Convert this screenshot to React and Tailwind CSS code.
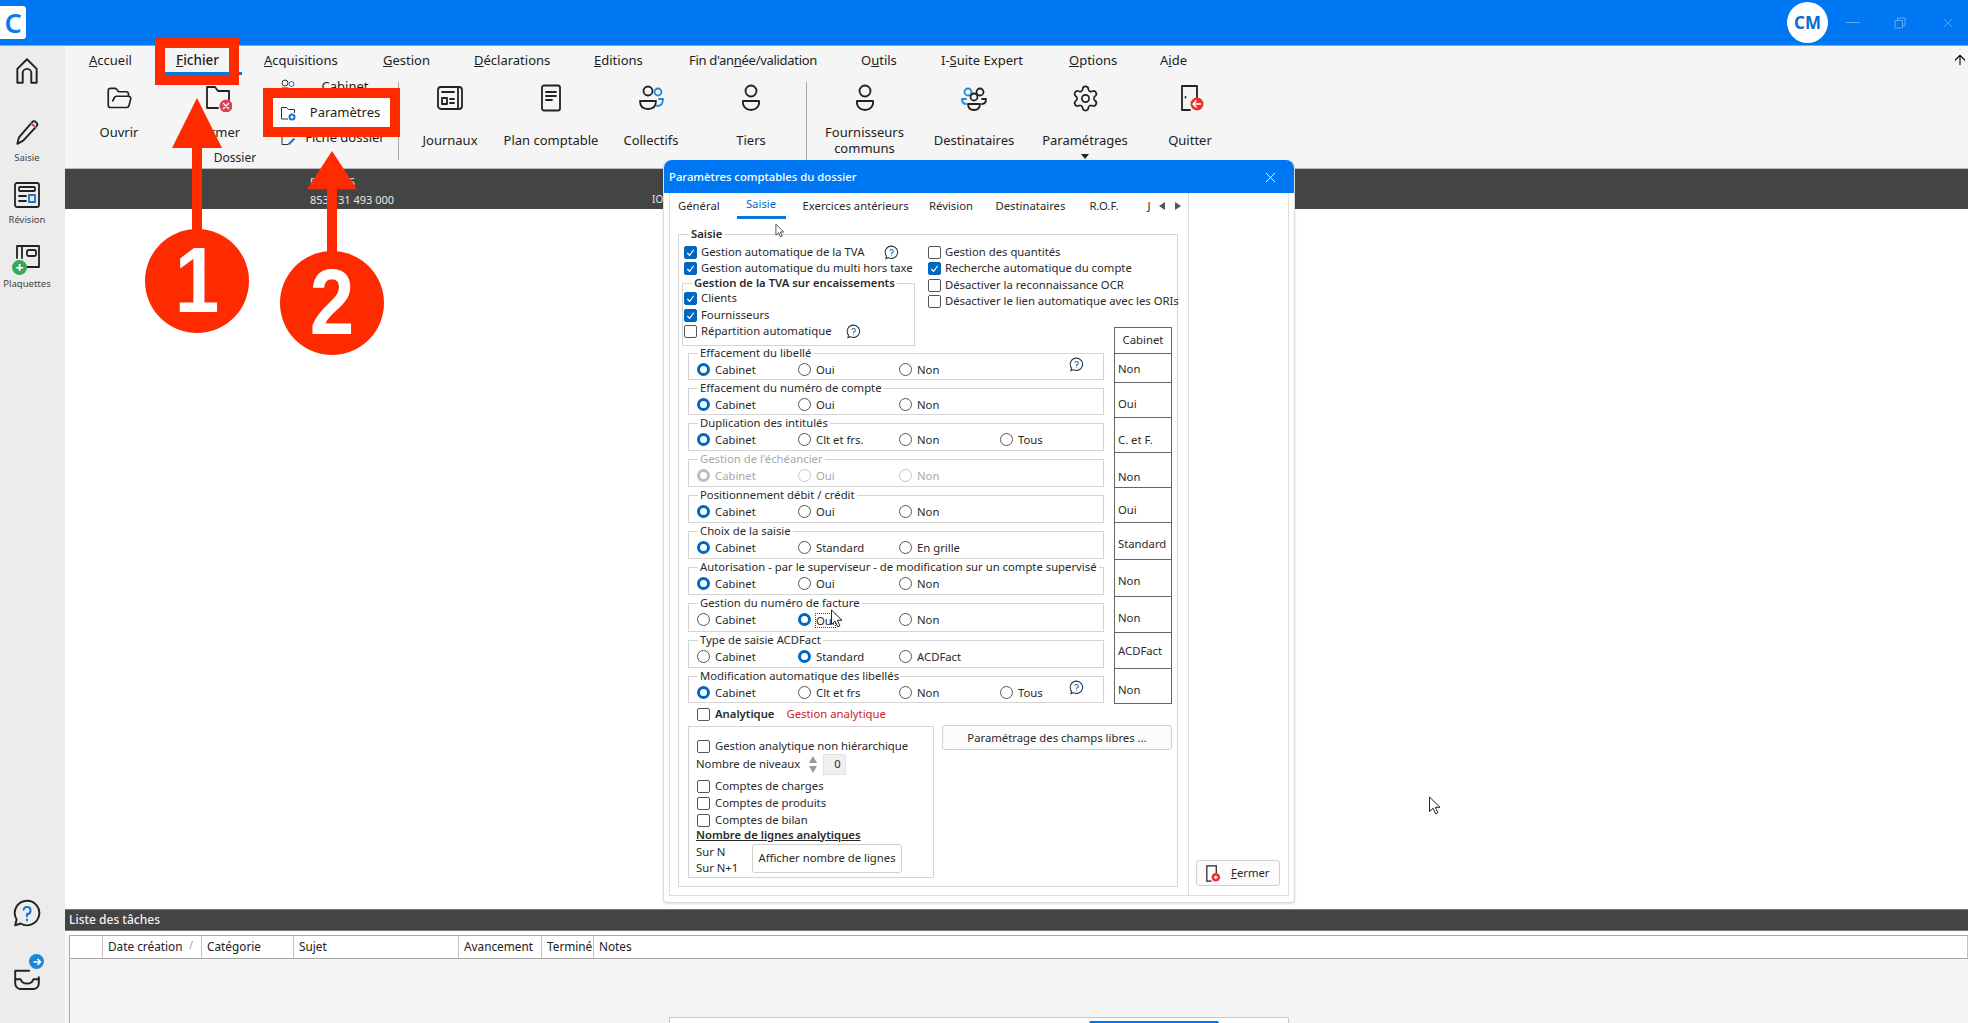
import { Settings, FolderOpen, X, ArrowUp } from "lucide-react";

const tabs = [
    { w: "w-[87px]", a: "", k: "A", b: "ccueil" },
    { w: "w-[88px]", a: "", k: "F", b: "ichier", cls: "font-medium text-[13.5px] -mt-[2px]" },
    { w: "w-[119px]", a: "", k: "A", b: "cquisitions" },
    { w: "w-[91px]", a: "", k: "G", b: "estion" },
    { w: "w-[120px]", a: "", k: "D", b: "éclarations" },
    { w: "w-[95px]", a: "", k: "E", b: "ditions" },
    { w: "w-[172px]", a: "Fin d'an", k: "n", b: "ée/validation", cls: "tracking-[-0.3px]" },
    { w: "w-[80px]", a: "O", k: "u", b: "tils" },
    { w: "w-[128px]", a: "I-", k: "S", b: "uite Expert" },
    { w: "w-[91px]", a: "", k: "O", b: "ptions" },
    { w: "w-[60px]", a: "A", k: "i", b: "de" },
];

const radioGroups = [
    { title: "Effacement du libellé", h: "h-[27px]", options: ["Cabinet", "Oui", "Non"], checked: 0, help: true },
    { title: "Effacement du numéro de compte", h: "h-[27px]", options: ["Cabinet", "Oui", "Non"], checked: 0 },
    { title: "Duplication des intitulés", h: "h-[28px]", options: ["Cabinet", "Clt et frs.", "Non", "Tous"], checked: 0 },
    { title: "Gestion de l'échéancier", h: "h-[28px]", options: ["Cabinet", "Oui", "Non"], checked: 0, disabled: true },
    { title: "Positionnement débit / crédit", h: "h-[28px]", options: ["Cabinet", "Oui", "Non"], checked: 0 },
    { title: "Choix de la saisie", h: "h-[28px]", options: ["Cabinet", "Standard", "En grille"], checked: 0 },
    { title: "Autorisation - par le superviseur - de modification sur un compte supervisé", h: "h-[28px]", options: ["Cabinet", "Oui", "Non"], checked: 0 },
    { title: "Gestion du numéro de facture", h: "h-[29px]", options: ["Cabinet", "Oui", "Non"], checked: 1, focus: true },
    { title: "Type de saisie ACDFact", h: "h-[28px]", options: ["Cabinet", "Standard", "ACDFact"], checked: 1 },
    { title: "Modification automatique des libellés", h: "h-[27px]", options: ["Cabinet", "Clt et frs", "Non", "Tous"], checked: 0, help: true },
];

const cabinetCells = [
    { label: "Non", h: "h-[29px]", pt: "pt-[3px]" },
    { label: "Oui", h: "h-[35px]", pt: "pt-[9px]" },
    { label: "C. et F.", h: "h-[35px]", pt: "pt-[10px]" },
    { label: "Non", h: "h-[35px]", pt: "pt-[14px]" },
    { label: "Oui", h: "h-[35px]", pt: "pt-[10px]" },
    { label: "Standard", h: "h-[37px]", pt: "pt-[6px]" },
    { label: "Non", h: "h-[37px]", pt: "pt-[7px]" },
    { label: "Non", h: "h-[36px]", pt: "pt-[8px]" },
    { label: "ACDFact", h: "h-[36px]", pt: "pt-[2px]" },
    { label: "Non", h: "h-[36px]", pt: "pt-[8px]" },
];

const columns = [
    { label: "", w: "w-[33px]" },
    { label: "Date création", w: "w-[99px]", sort: true },
    { label: "Catégorie", w: "w-[92px]" },
    { label: "Sujet", w: "w-[165px]" },
    { label: "Avancement", w: "w-[83px]" },
    { label: "Terminé", w: "w-[52px]" },
    { label: "Notes", w: "flex-1" },
];

const Icon = ({ className = "w-7 h-7", children }) => (
    <svg viewBox="0 0 28 28" fill="none" stroke="#222" strokeWidth="1.8" strokeLinecap="round" strokeLinejoin="round" className={className}>
        {children}
    </svg>
);

const HelpIcon = ({ className = "w-[15px] h-[15px]" }) => (
    <svg viewBox="0 0 16 16" fill="none" className={className}>
        <path d="M8 1.2a6.6 6.6 0 1 1-3.4 12.3L2 14.6l.7-2.8A6.6 6.6 0 0 1 8 1.2Z" stroke="#333" strokeWidth="1.1" />
        <path d="M6.2 6.2A1.9 1.9 0 1 1 8 8.6V9.8M8 11.2v.9" stroke="#1a73c8" strokeWidth="1.2" />
    </svg>
);

const Checkbox = ({ checked }) => (
    <span className={`flex items-center justify-center shrink-0 w-[13px] h-[13px] rounded-[2px] border ${checked ? "bg-[#0067c0] border-[#0067c0]" : "bg-white border-[#555]"}`}>
        {checked && (
            <svg viewBox="0 0 12 12" className="w-[11px] h-[11px]" fill="none" stroke="white" strokeWidth="1.3">
                <path d="M2.5 6.5 5 9l4.5-6" />
            </svg>
        )}
    </span>
);

const CheckRow = ({ label, checked, children, className = "" }) => (
    <div className={`flex items-center gap-[4px] h-[16.5px] ${className}`}>
        <Checkbox checked={checked} />
        <span className="whitespace-nowrap">{label}</span>
        {children}
    </div>
);

const Radio = ({ checked, disabled }) => {
    if (checked) {
        return <span className={`block shrink-0 w-[13px] h-[13px] rounded-full bg-white border-[3.5px] ${disabled ? "border-[#bdbdbd]" : "border-[#0067c0]"}`} />;
    }
    return <span className={`block shrink-0 w-[13px] h-[13px] rounded-full bg-white border ${disabled ? "border-[#c4c4c4]" : "border-[#555]"}`} />;
};

const GroupBox = ({ title, className = "", titleClass = "left-[9px]", children }) => (
    <div className={`relative border border-[#d4d4d4] ${className}`}>
        <span className={`absolute -top-[8px] bg-white px-[2px] leading-[14px] whitespace-nowrap ${titleClass}`}>{title}</span>
        {children}
    </div>
);

const RadioGroup = ({ group }) => (
    <GroupBox
        title={group.title}
        className={group.h}
        titleClass={`left-[9px] ${group.disabled ? "text-[#a8a8a8]" : ""}`}
    >
        <div className="flex pt-[7px] pl-[8px]">
            {group.options.map((option, index) => (
                <div key={option} className="flex items-center gap-[5px] w-[101px] h-4">
                    <Radio checked={group.checked === index} disabled={group.disabled} />
                    <span className={`whitespace-nowrap translate-y-[1px] ${group.disabled ? "text-[#a8a8a8]" : ""} ${group.focus && index === 1 ? "outline-1 outline-dotted outline-[#444] leading-[13px]" : ""}`}>
                        {option}
                    </span>
                </div>
            ))}
        </div>
        {group.help && (
            <span className="absolute right-[19px] top-[3px]">
                <HelpIcon />
            </span>
        )}
    </GroupBox>
);

const RibbonItem = ({ width, label, mt = "mt-[12px]", children }) => (
    <div className={`flex flex-col items-center pt-[8px] shrink-0 ${width}`}>
        <div className="h-[28px] flex items-center justify-center">{children}</div>
        <div className={`text-center leading-[16px] ${mt}`}>{label}</div>
    </div>
);

const SideLabel = ({ children, mt = "mt-[5px]" }) => (
    <div className={`text-[9.5px] leading-[12px] text-[#444] ${mt}`}>{children}</div>
);

const Callout = ({ number, className }) => (
    <div className={`absolute flex flex-col items-center w-[104px] ${className}`}>
        <svg viewBox="0 0 50 132" preserveAspectRatio="none" className="w-[50px] -mb-[1px]" fill="#fe2a00">
            <path d="M25 0 50 50H30V132H20V50H0Z" />
        </svg>
        <div className="w-[104px] h-[104px] rounded-full bg-[#fe2a00] flex items-center justify-center text-white text-[80px] font-bold font-['Liberation_Sans',sans-serif]">
            <span className="scale-y-[1.15]">{number}</span>
        </div>
    </div>
);

const Cursor = ({ className }) => (
    <svg viewBox="0 0 14 20" className={`absolute w-[14px] h-[20px] ${className}`} fill="white" stroke="#222" strokeWidth="1">
        <path d="M1.5 1v14.5l3.6-3.3 2.5 5.6 2.3-1-2.5-5.5h4.6Z" />
    </svg>
);

const App = () => {
    return (
        <div className="relative w-[1968px] h-[1023px] overflow-hidden bg-white flex flex-col text-[#222] text-[13px] font-['Noto_Sans',sans-serif]">
            {/* Title bar */}
            <header className="h-[46px] shrink-0 bg-[#0077f2] border-b border-[#5cb0fa] flex items-center">
                <div className="w-[26px] h-[33px] bg-white rounded-r-[3px] flex items-center justify-center text-[#0a7af0] text-[27px] font-semibold leading-none">
                    C
                </div>
                <div className="ml-auto w-[41px] h-[41px] rounded-full bg-white flex items-center justify-center text-[#0a6bd0] text-[17px] font-bold">
                    CM
                </div>
                <div className="flex items-center ml-[18px] mr-[12px] gap-[34px] text-[#62a9f6]">
                    <span className="block w-[14px] h-px bg-[#62a9f6]" />
                    <svg viewBox="0 0 12 12" className="w-[12px] h-[12px]" fill="none" stroke="currentColor">
                        <path d="M1 3.5h7.5V11H1ZM3.5 3.5V1H11v7.5H8.5" />
                    </svg>
                    <X className="w-[16px] h-[16px]" strokeWidth={1.2} />
                </div>
            </header>

            <div className="flex-1 flex min-h-0">
                {/* Left sidebar */}
                <aside className="w-[65px] shrink-0 bg-[#ececec] flex flex-col items-center pt-[10px] pb-[33px] pr-[11px]">
                    <Icon className="w-[30px] h-[30px]">
                        <path d="M5 25V12L14 3l9 9v13h-5V16a4 4 0 0 0-8 0v9Z" />
                    </Icon>
                    <Icon className="w-[30px] h-[30px] mt-[31px]">
                        <path d="M5 25l1.5-6L19 4.5a2 2 0 0 1 3 0l1 1a2 2 0 0 1 0 3L10.500 22Z" />
                        <path d="M18 6l4.500 4" stroke="#d8465a" />
                    </Icon>
                    <SideLabel>Saisie</SideLabel>
                    <Icon className="w-[28px] h-[28px] mt-[17px]">
                        <rect x="2" y="2" width="24" height="24" rx="2" />
                        <rect x="6" y="6" width="16" height="4" rx="1" />
                        <path d="M6 15h7M6 20h7" />
                        <rect x="16" y="14" width="6" height="7" stroke="#1a73c8" />
                    </Icon>
                    <SideLabel>Révision</SideLabel>
                    <div className="relative mt-[18px]">
                        <Icon className="w-[28px] h-[28px]">
                            <path d="M4 14V2h22v21H14" />
                            <path d="M9 2v12" />
                            <rect x="14" y="6" width="9" height="6" rx="1.500" />
                        </Icon>
                        <span className="absolute left-[-1px] bottom-[-3px] w-[15px] h-[15px] rounded-full bg-[#3ba55d] text-white flex items-center justify-center text-[14px] font-bold leading-none">
                            +
                        </span>
                    </div>
                    <SideLabel mt="mt-[6px]">Plaquettes</SideLabel>
                    <div className="mt-auto">
                        <Icon className="w-[30px] h-[30px]">
                            <path d="M14 2.500a11.500 11.500 0 1 1-6 21.300L3 25.500l1.300-5.500A11.500 11.500 0 0 1 14 2.500Z" />
                            <path d="M10.800 11a3.300 3.300 0 1 1 3.200 4v2M14 20v1" stroke="#1a73c8" />
                        </Icon>
                    </div>
                    <div className="relative mt-[32px]">
                        <Icon className="w-[30px] h-[30px]">
                            <path d="M3 10h13M25 16v6a5 5 0 0 1-5 5H8a5 5 0 0 1-5-5V10" />
                            <path d="M3 18h5c1 3 3 4 6 4s5-1 6-4h5" />
                        </Icon>
                        <span className="absolute right-[-2px] top-[-6px] w-[15px] h-[15px] rounded-full bg-[#1a87d8] text-white flex items-center justify-center">
                            <svg viewBox="0 0 10 10" className="w-[10px] h-[10px]" fill="none" stroke="white" strokeWidth="1.600">
                                <path d="M1.500 5h7M5.500 2l3 3-3 3" />
                            </svg>
                        </span>
                    </div>
                </aside>

                <main className="flex-1 min-w-0 flex flex-col">
                    {/* Ribbon */}
                    <section className="h-[123px] shrink-0 bg-[#f5f5f5] border-b border-[#bbb] relative">
                        <nav className="h-[30px] flex items-center pl-[24px] text-[13px]">
                            {tabs.map((tab) => (
                                <div key={`${tab.a}${tab.k}${tab.b}`} className={`${tab.w} shrink-0 whitespace-nowrap ${tab.cls || ""}`}>
                                    {tab.a}
                                    <span className="underline">{tab.k}</span>
                                    {tab.b}
                                </div>
                            ))}
                        </nav>
                        <ArrowUp className="absolute right-[0px] top-[5px] w-[16px] h-[18px] text-black" strokeWidth={1.6} />
                        <div className="flex pl-[4px] text-[13px]">
                            <div className="w-[329px] shrink-0 flex flex-col">
                                <div className="flex h-[73px]">
                                    <RibbonItem width="w-[100px]" label="Ouvrir">
                                        <FolderOpen className="w-[29px] h-[27px]" strokeWidth={1.5} color="#222" />
                                    </RibbonItem>
                                    <RibbonItem width="w-[98px]" label="Fermer">
                                        <Icon>
                                            <path d="M3 24V3h8l3 4h11v9M3 24h11" />
                                            <circle cx="22" cy="22" r="6.500" fill="#d8465a" stroke="none" />
                                            <path d="M19.500 19.500l5 5M24.500 19.500l-5 5" stroke="white" strokeWidth="1.300" />
                                        </Icon>
                                    </RibbonItem>
                                    <div className="flex flex-col gap-[3.500px] flex-1">
                                        <div className="flex items-center h-[22px] pl-[13px]">
                                            <svg viewBox="0 0 16 16" className="w-4 h-4 shrink-0" fill="none" stroke="#333">
                                                <circle cx="5" cy="4" r="3" />
                                                <circle cx="11.500" cy="5" r="2.500" stroke="#1a73c8" />
                                                <path d="M1.500 9h7v2.500a3 3 0 0 1-3 3h-1a3 3 0 0 1-3-3Z" />
                                            </svg>
                                            <span className="w-[98px] text-center">Cabinet</span>
                                        </div>
                                        {/* sits above the white highlight of the red box */}
                                        <div className="relative z-10 flex items-center h-[22px] pl-[13px]">
                                            <svg viewBox="0 0 16 16" className="w-4 h-4 shrink-0" fill="none" stroke="#333">
                                                <path d="M1.500 14V2.500h5l2 2h6V8M1.500 14H8" />
                                                <circle cx="12" cy="12" r="2.500" stroke="#1a73c8" strokeWidth="2" />
                                            </svg>
                                            <span className="w-[98px] text-center">Paramètres</span>
                                        </div>
                                        <div className="flex items-center h-[22px] pl-[13px]">
                                            <svg viewBox="0 0 16 16" className="w-4 h-4 shrink-0" fill="none" stroke="#333">
                                                <path d="M8 14.500H2V2h10v5" />
                                                <path d="M8.500 14.500l6-6" stroke="#1a73c8" strokeWidth="2" />
                                            </svg>
                                            <span className="w-[98px] text-center">Fiche dossier</span>
                                        </div>
                                    </div>
                                </div>
                                <div className="text-center text-[12px] leading-[16px] pl-[3px] mt-[1px]">Dossier</div>
                            </div>
                            <div className="w-px h-[78px] mt-[6px] bg-[#aaa] shrink-0" />
                            <RibbonItem width="w-[102px]" label="Journaux" mt="mt-[20px]">
                                <Icon>
                                    <rect x="2" y="3" width="24" height="22" rx="3" />
                                    <path d="M22 3v22M6 8h12M6 14h5v6H6ZM14 15h4M14 19h4" />
                                </Icon>
                            </RibbonItem>
                            <RibbonItem width="w-[100px]" label="Plan comptable" mt="mt-[20px]">
                                <Icon>
                                    <rect x="5" y="1.500" width="18" height="25" rx="2" />
                                    <path d="M9 8h10M9 12h10M9 16h6" />
                                </Icon>
                            </RibbonItem>
                            <RibbonItem width="w-[100px]" label="Collectifs" mt="mt-[20px]">
                                <Icon>
                                    <circle cx="11" cy="7" r="4.500" />
                                    <path d="M3 17h16c0 5-3 8-8 8s-8-3-8-8Z" />
                                    <circle cx="21" cy="8" r="3.500" stroke="#1a87d8" />
                                    <path d="M22 15h4c0 4-2 7-6 7" stroke="#1a87d8" />
                                </Icon>
                            </RibbonItem>
                            <RibbonItem width="w-[100px]" label="Tiers" mt="mt-[20px]">
                                <Icon>
                                    <circle cx="14" cy="7" r="5.500" />
                                    <path d="M6 17h16c1 5-3 9-8 9s-9-4-8-9Z" />
                                </Icon>
                            </RibbonItem>
                            <div className="w-[5px] shrink-0" />
                            <div className="w-px h-[78px] mt-[6px] bg-[#aaa] shrink-0" />
                            <RibbonItem width="w-[115px]" label={<>Fournisseurs<br />communs</>}>
                                <Icon>
                                    <circle cx="14" cy="7" r="5.500" />
                                    <path d="M6 17h16c1 5-3 9-8 9s-9-4-8-9Z" />
                                </Icon>
                            </RibbonItem>
                            <RibbonItem width="w-[104px]" label="Destinataires" mt="mt-[20px]">
                                <Icon>
                                    <circle cx="8" cy="8" r="3.500" stroke="#1a87d8" />
                                    <path d="M6 20c-3 0-4-2-4-5h4" stroke="#1a87d8" />
                                    <circle cx="20" cy="8" r="3.500" />
                                    <path d="M22 15h4c0 3-1 5-4 5" />
                                    <circle cx="14" cy="13" r="3.500" />
                                    <path d="M8 20h12c0 4-2 6-6 6s-6-2-6-6Z" />
                                </Icon>
                            </RibbonItem>
                            <RibbonItem
                                width="w-[118px]"
                                mt="mt-[20px]"
                                label={
                                    <>
                                        Paramétrages
                                        <span className="block mx-auto mt-[6px] w-0 h-0 border-x-[4px] border-x-transparent border-t-[5px] border-t-[#222]" />
                                    </>
                                }
                            >
                                <Settings className="w-[29px] h-[29px]" strokeWidth={1.4} color="#222" />
                            </RibbonItem>
                            <RibbonItem width="w-[92px]" label="Quitter" mt="mt-[20px]">
                                <Icon>
                                    <path d="M14 26H6V2h15v13" />
                                    <path d="M9.500 13v.5" />
                                    <circle cx="21" cy="20" r="6.500" fill="#e8342f" stroke="none" />
                                    <path d="M24.500 20h-7M20 17l-3 3 3 3" stroke="white" strokeWidth="1.500" />
                                </Icon>
                            </RibbonItem>
                        </div>
                        {/* active tab underline */}
                        <span className="absolute left-[100px] top-[26px] w-[77px] h-[2.500px] bg-[#0a78d8]" />
                    </section>

                    {/* Dossier bar */}
                    <section className="h-[40px] shrink-0 bg-[#444] text-[#e6e6e6] text-[11px] leading-[18px] pl-[245px] pt-[4px] flex">
                        <div className="w-[342px]">
                            <div>BOVIERS</div>
                            <div>853 131 493 000</div>
                        </div>
                        <div className="pt-[17px] text-[10px]">IO</div>
                    </section>

                    <section className="flex-1 bg-white" />

                    {/* Task list */}
                    <section className="h-[114px] shrink-0 flex flex-col bg-[#f5f5f5]">
                        <div className="h-[22px] shrink-0 bg-[#444] text-[#f2f2f2] text-[12px] font-medium pl-[4px] flex items-center border-y border-[#7a7a7a]">
                            Liste des tâches
                        </div>
                        <div className="h-[4px] bg-white shrink-0" />
                        <div className="flex-1 ml-[4px] border-l border-[#a8a8a8] flex flex-col">
                            <div className="h-[24px] shrink-0 flex bg-white border-y border-[#a8a8a8] text-[11.800px]">
                                {columns.map((column) => (
                                    <div key={column.label} className={`${column.w} shrink-0 relative flex items-center pl-[5px] border-r border-[#c4c4c4] whitespace-nowrap`}>
                                        {column.label}
                                        {column.sort && <span className="absolute right-[8px] top-[2px] text-[#999] text-[10px]">/</span>}
                                    </div>
                                ))}
                            </div>
                        </div>
                    </section>
                </main>
            </div>

            {/* Dialog behind, only its top edge shows */}
            <div className="absolute left-[669px] top-[1017px] w-[620px] h-[10px] bg-white border border-[#c8c8c8] pl-[419px] pt-[3px]">
                <div className="w-[130px] h-[4px] bg-[#0077f2] rounded-t-[2px]" />
            </div>

            {/* Parametres dialog */}
            <div className="absolute left-[663px] top-[160px] w-[632px] h-[743px] flex flex-col bg-white rounded-t-[8px] rounded-b-[4px] border border-[#dcdcdc] border-t-0 text-[11.300px] text-[#2a2a2a] shadow-sm">
                <div className="h-[33px] shrink-0 bg-[#0077f2] rounded-t-[8px] flex items-center justify-between pl-[5px] pr-[15px] pt-[1px] text-white font-medium">
                    Paramètres comptables du dossier
                    <X className="w-[17px] h-[17px]" strokeWidth={1.300} />
                </div>
                <div className="flex-1 mx-[5px] mb-[6px] flex border-x border-b border-[#dedede] min-h-0">
                    <div className="w-[519px] shrink-0 border-r border-[#dedede] pl-[8px]">
                        {/* Tabs */}
                        <div className="h-[41px] pt-[3px] flex items-start">
                            <div className="w-[58.500px] leading-[20px]">Général</div>
                            <div className="w-[49px] h-[23px] border-b-[3px] border-[#0a78d8] text-center leading-[16px] text-[#0067c0]">Saisie</div>
                            <div className="w-[126.500px] ml-[17px] leading-[20px]">Exercices antérieurs</div>
                            <div className="w-[66.500px] leading-[20px]">Révision</div>
                            <div className="w-[94px] leading-[20px]">Destinataires</div>
                            <div className="w-[58px] leading-[20px]">R.O.F.</div>
                            <div className="w-[11px] leading-[20px]">J</div>
                            <div className="flex items-center gap-[10px] h-[20px] text-[#555]">
                                <span className="w-0 h-0 border-y-[4.500px] border-y-transparent border-r-[6px] border-r-[#555]" />
                                <span className="w-0 h-0 border-y-[4.500px] border-y-transparent border-l-[6px] border-l-[#555]" />
                            </div>
                        </div>

                        {/* Saisie group */}
                        <GroupBox title="Saisie" className="w-[500px] h-[653px]" titleClass="left-[10px] font-semibold">
                            <div className="flex pt-[9px] pl-[3px]">
                                <div className="w-[233px] shrink-0">
                                    <CheckRow label="Gestion automatique de la TVA" checked className="pl-[2px]">
                                        <span className="ml-[16px]"><HelpIcon /></span>
                                    </CheckRow>
                                    <CheckRow label="Gestion automatique du multi hors taxe" checked className="pl-[2px]" />
                                    <GroupBox
                                        title="Gestion de la TVA sur encaissements"
                                        className="mt-[6px] h-[63px] pt-[6.500px] pl-[1px]"
                                        titleClass="left-[9px] font-semibold"
                                    >
                                        <CheckRow label="Clients" checked />
                                        <CheckRow label="Fournisseurs" checked />
                                        <CheckRow label="Répartition automatique">
                                            <span className="ml-[10px]"><HelpIcon /></span>
                                        </CheckRow>
                                    </GroupBox>
                                </div>
                                <div className="ml-[13px]">
                                    <CheckRow label="Gestion des quantités" />
                                    <CheckRow label="Recherche automatique du compte" checked />
                                    <CheckRow label="Désactiver la reconnaissance OCR" />
                                    <CheckRow label="Désactiver le lien automatique avec les ORIs" />
                                </div>
                            </div>

                            <div className="flex pl-[9px] mt-[7px]">
                                <div className="w-[416px] shrink-0">
                                    <div className="flex flex-col gap-[8px]">
                                        {radioGroups.map((group) => (
                                            <RadioGroup key={group.title} group={group} />
                                        ))}
                                    </div>
                                    <div className="flex items-center gap-[5px] h-4 mt-[3px] pl-[9px]">
                                        <Checkbox />
                                        <span className="font-semibold">Analytique</span>
                                        <span className="ml-[7px] text-[#d0202a]">Gestion analytique</span>
                                    </div>
                                </div>
                                <div className="ml-[10px] -mt-[26px] w-[58px] border border-[#666] border-b-0 self-start">
                                    <div className="h-[25px] flex items-center justify-center">Cabinet</div>
                                    {cabinetCells.map((cell, index) => (
                                        <div key={index} className={`${cell.h} ${cell.pt} flex items-center pl-[3px] border-t border-[#666] last:border-b`}>
                                            {cell.label}
                                        </div>
                                    ))}
                                </div>
                            </div>

                            <div className="flex pl-[9px] mt-[4px] items-start">
                                {/* Analytique group */}
                                <div className="w-[246px] h-[152px] shrink-0 border border-[#d4d4d4] pt-[11px] pl-[8px]">
                                    <div className="flex items-center gap-[5px] h-4">
                                        <Checkbox />
                                        <span>Gestion analytique non hiérarchique</span>
                                    </div>
                                    <div className="flex items-center h-[21px] -ml-[1px]">
                                        <span className="w-[107px]">Nombre de niveaux</span>
                                        <span className="w-[20px] flex flex-col items-center gap-[3px]">
                                            <span className="w-0 h-0 border-x-[4.500px] border-x-transparent border-b-[7px] border-b-[#999]" />
                                            <span className="w-0 h-0 border-x-[4.500px] border-x-transparent border-t-[7px] border-t-[#999]" />
                                        </span>
                                        <span className="w-[23px] h-[21px] bg-[#f0f0f0] border border-[#e2e2e2] flex items-center justify-center pl-[6px]">0</span>
                                    </div>
                                    <CheckRow label="Comptes de charges" className="mt-[3px] !gap-[5px]" />
                                    <CheckRow label="Comptes de produits" className="mt-[1px] !gap-[5px]" />
                                    <CheckRow label="Comptes de bilan" className="!gap-[5px]" />
                                    <div className="-ml-[1px] -mt-[1px] leading-[14px] font-semibold underline">Nombre de lignes analytiques</div>
                                    <div className="flex mt-[2px] -ml-[1px]">
                                        <div className="w-[56px] leading-[16px]">
                                            <div>Sur N</div>
                                            <div>Sur N+1</div>
                                        </div>
                                        <div className="w-[150px] h-[29px] border border-[#d0d0d0] rounded-[3px] flex items-center justify-center whitespace-nowrap">
                                            Afficher nombre de lignes
                                        </div>
                                    </div>
                                </div>
                                <div className="ml-[8px] w-[230px] h-[25px] -mt-[1px] pt-[2px] bg-[#fbfbfb] border border-[#d0d0d0] rounded-[3px] flex items-center justify-center">
                                    Paramétrage des champs libres ...
                                </div>
                            </div>
                        </GroupBox>
                    </div>

                    <div className="flex-1 flex flex-col justify-end pb-[9px] pl-[7px]">
                        <div className="w-[84px] h-[26px] bg-[#fbfbfb] border border-[#d0d0d0] rounded-[3px] flex items-center pl-[7px] gap-[10px]">
                            <svg viewBox="0 0 18 18" className="w-[17px] h-[17px]" fill="none" stroke="#222" strokeWidth="1.300">
                                <path d="M8 17H3V1h10v8" />
                                <circle cx="12.500" cy="13" r="4.500" fill="#e8342f" stroke="none" />
                                <path d="M10.500 13h4M12.500 11v4" stroke="white" />
                            </svg>
                            <span><span className="underline">F</span>ermer</span>
                        </div>
                    </div>
                </div>
            </div>

            {/* Red annotations */}
            <div className="absolute left-[155px] top-[38px] w-[84px] h-[47px] border-[10px] border-[#fe2a00]" />
            <div className="absolute left-[263px] top-[88px] w-[137px] h-[49px] border-[10px] border-[#fe2a00] bg-white" />
            <Callout number="1" className="left-[145px] top-[98px] [&>svg]:h-[132px]" />
            <Callout number="2" className="left-[280px] top-[151px] [&>svg]:h-[101px]" />

            {/* Mouse cursors */}
            <Cursor className="left-[773px] top-[221px] scale-75" />
            <Cursor className="left-[830px] top-[609px]" />
            <Cursor className="left-[1428px] top-[796px]" />
        </div>
    );
};

export default App;
